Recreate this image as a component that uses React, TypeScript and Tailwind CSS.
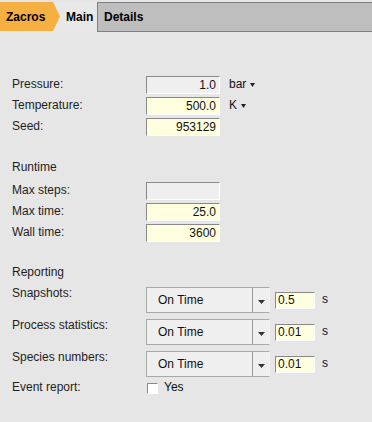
import type { ReactNode } from "react";

const FONT = { fontFamily: '"Liberation Sans", Arial, sans-serif' };

function Caret() {
  return (
    <svg width="5" height="4" viewBox="0 0 5 4" className="ml-[4px]">
      <polygon points="0,0 5,0 2.5,4" fill="#222" />
    </svg>
  );
}

function Field({
  value,
  tone = "yellow",
}: {
  value?: string;
  tone?: "yellow" | "gray";
}) {
  return (
    <div
      className={`h-[18px] w-[74px] border border-t-[#8a8a8a] border-l-[#8a8a8a] border-r-white border-b-white px-[3px] text-right text-[12px] leading-[16px] text-[#111] ${
        tone === "yellow" ? "bg-[#ffffe0]" : "bg-[#efefef]"
      }`}
    >
      {value}
    </div>
  );
}

function Row({ label, children }: { label: string; children: ReactNode }) {
  return (
    <div className="flex h-[21px] items-start">
      <div className="w-[134px] text-[12px] leading-[17px] text-[#1e1e1e]">{label}</div>
      {children}
    </div>
  );
}

function Combo({ label, value, amount }: { label: string; value: string; amount: string }) {
  return (
    <div className="flex h-[32px] items-start">
      <div className="mt-[-1px] w-[134px] text-[12px] leading-[14px] text-[#1e1e1e]">{label}</div>
      <div className="flex h-[26px] w-[124px] border border-[#a8a8a8] border-r-[#f4f4f4] bg-[#efefef]">
        <div className="flex flex-1 items-center pl-[11px] text-[12px] text-[#111]">{value}</div>
        <div className="flex w-[17px] items-center justify-center border-l border-[#9a9a9a] pt-[3px]">
          <svg width="7" height="4" viewBox="0 0 7 4">
            <polygon points="0,0 7,0 3.5,4" fill="#333" />
          </svg>
        </div>
      </div>
      <div className="ml-[5px] mt-[5px] h-[17px] w-[40px] border border-t-[#8a8a8a] border-l-[#8a8a8a] border-r-white border-b-white bg-[#ffffe0] pl-[2px] text-[12px] leading-[15px] text-[#111]">
        {amount}
      </div>
      <div className="ml-[7px] mt-[5px] text-[12px] leading-[15px] text-[#111]">s</div>
    </div>
  );
}

export default function App() {
  return (
    <div className="h-[422px] w-[372px] overflow-hidden bg-[#e6e6e6]" style={FONT}>
      <div className="pt-[2px]">
        <div className="flex h-[30px]">
          <div className="flex w-[97px] bg-[#e8e8e8]">
            <div className="flex h-[29px] w-[60px] items-center bg-[#f6b042] pl-[6px] text-[12px] font-bold text-black [clip-path:polygon(0_0,53px_0,60px_50%,53px_100%,0_100%)]">
              Zacros
            </div>
            <div className="flex h-[29px] items-center pl-[6px] text-[12px] font-bold text-black">Main</div>
          </div>
          <div className="flex flex-1 items-center border-y border-l border-[#7f7f7f] bg-[#bebebe] pl-[6px] text-[12px] font-bold text-black">
            Details
          </div>
        </div>
      </div>

      <div className="pl-[12px] pt-[44px]">
        <Row label="Pressure:">
          <Field value="1.0" tone="gray" />
          <div className="ml-[9px] flex items-center text-[12px] leading-[17px] text-[#111]">
            bar
            <Caret />
          </div>
        </Row>
        <Row label="Temperature:">
          <Field value="500.0" />
          <div className="ml-[9px] flex items-center text-[12px] leading-[17px] text-[#111]">
            K
            <Caret />
          </div>
        </Row>
        <Row label="Seed:">
          <Field value="953129" />
        </Row>

        <div className="mt-[21px] h-[22px] text-[12px] leading-[14px] text-[#1e1e1e]">Runtime</div>
        <Row label="Max steps:">
          <Field tone="gray" />
        </Row>
        <Row label="Max time:">
          <Field value="25.0" />
        </Row>
        <Row label="Wall time:">
          <Field value="3600" />
        </Row>

        <div className="mt-[20px] h-[22px] text-[12px] leading-[14px] text-[#1e1e1e]">Reporting</div>
        <Combo label="Snapshots:" value="On Time" amount="0.5" />
        <Combo label="Process statistics:" value="On Time" amount="0.01" />
        <Combo label="Species numbers:" value="On Time" amount="0.01" />

        <div className="flex h-[21px] items-start">
          <div className="mt-[-3px] w-[135px] text-[12px] leading-[14px] text-[#1e1e1e]">Event report:</div>
          <div className="h-[11px] w-[11px] border border-t-[#8a8a8a] border-l-[#8a8a8a] border-r-white border-b-white bg-white" />
          <div className="ml-[6px] mt-[-3px] text-[12px] leading-[14px] text-[#111]">Yes</div>
        </div>
      </div>
    </div>
  );
}
